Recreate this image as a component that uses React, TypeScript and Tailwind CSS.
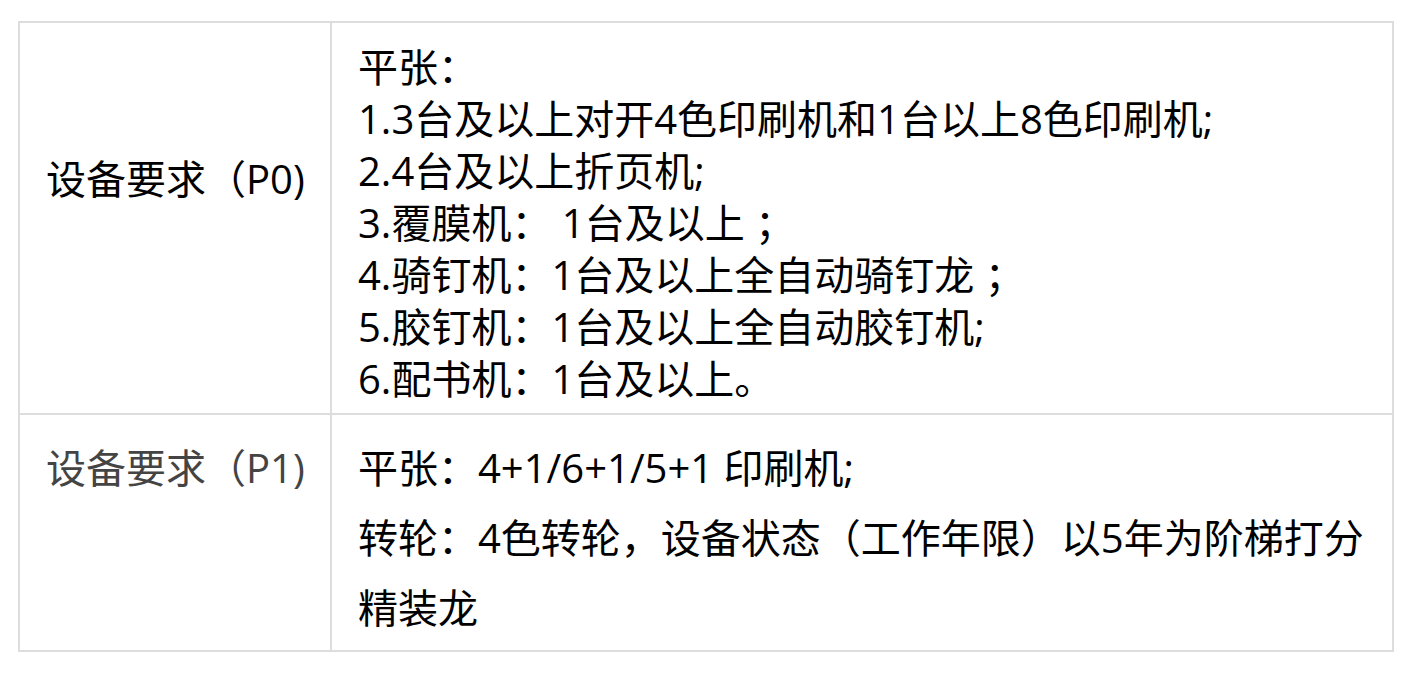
const font = {
  fontFamily: '"Open Sans", "Noto Sans CJK SC", sans-serif',
};

const p0Lines = [
  "平张：",
  "1.3台及以上对开4色印刷机和1台以上8色印刷机;",
  "2.4台及以上折页机;",
  "3.覆膜机： 1台及以上 ；",
  "4.骑钉机：1台及以上全自动骑钉龙 ；",
  "5.胶钉机：1台及以上全自动胶钉机;",
  "6.配书机：1台及以上。",
];

const p1Lines = [
  "平张：4+1/6+1/5+1 印刷机;",
  "转轮：4色转轮，设备状态（工作年限）以5年为阶梯打分",
  "精装龙",
];

export default function App() {
  return (
    <div className="min-h-screen bg-white pl-[18px] pt-[21px]" style={font}>
      <div className="w-[1376px] border-2 border-[#dddddd] text-[40px]">
        {/* P0 */}
        <div className="flex border-b-2 border-[#dddddd]">
          <div className="w-[312px] shrink-0 border-r-2 border-[#dddddd] pl-[26px] pt-[130px] leading-[52px] text-black">
            设备要求（P0)
          </div>
          <div className="flex-1 pl-[26px] pt-[18px] pb-[8px] leading-[52px] text-black">
            {p0Lines.map((l) => (
              <div key={l} className="whitespace-pre">{l}</div>
            ))}
          </div>
        </div>

        {/* P1 */}
        <div className="flex">
          <div className="w-[312px] shrink-0 border-r-2 border-[#dddddd] pl-[26px] pt-[18px] leading-[70px] text-[#444444]">
            设备要求（P1)
          </div>
          <div className="flex-1 pl-[26px] pt-[18px] pb-[7px] leading-[70px] text-black">
            {p1Lines.map((l) => (
              <div key={l}>{l}</div>
            ))}
          </div>
        </div>
      </div>
    </div>
  );
}
